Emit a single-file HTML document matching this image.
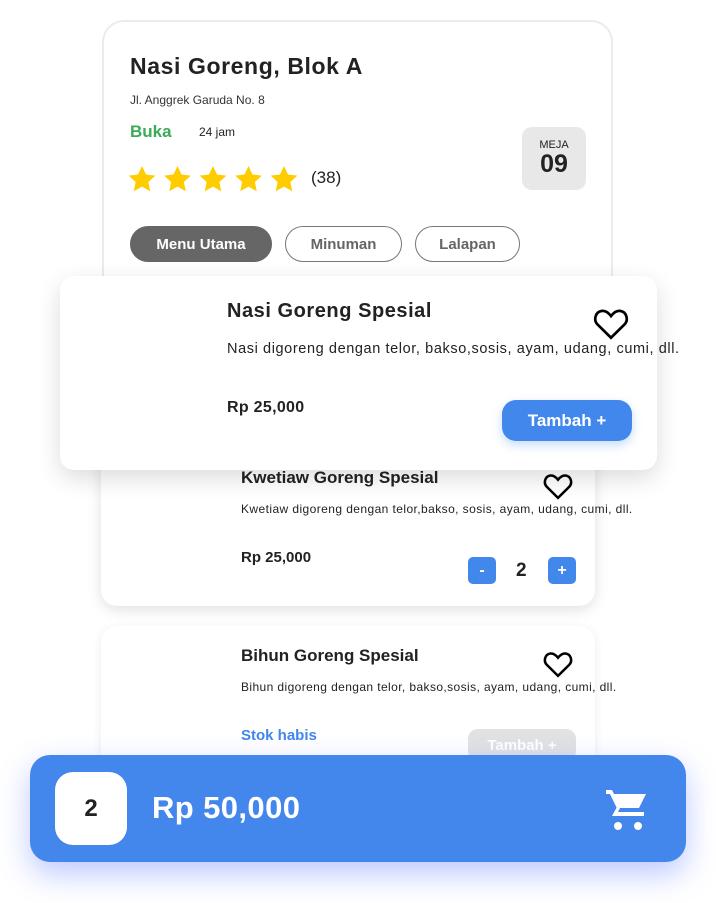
<!DOCTYPE html>
<html><head><meta charset="utf-8"><style>
*{margin:0;padding:0;box-sizing:border-box}
body{width:716px;height:903px;background:#fff;position:relative;overflow:hidden;font-family:"Liberation Sans",sans-serif;color:#222}
.a{position:absolute}
.card{position:absolute;background:#fff;border-radius:16px}
.b{font-weight:bold}
.tab{position:absolute;top:226px;height:36px;border-radius:18px;font-size:15px;font-weight:bold;display:flex;align-items:center;justify-content:center;border:1px solid #777;color:#666}
.btn{position:absolute;background:#4287ec;color:#fff;border-radius:5px;display:flex;align-items:center;justify-content:center;font-weight:bold}
</style></head><body>
<div class="card" style="left:102px;top:20px;width:511px;height:300px;border:2px solid #ebebeb;border-radius:22px"></div>
<div class="a b" style="left:130px;top:53px;font-size:23px;letter-spacing:.6px">Nasi Goreng, Blok A</div>
<div class="a" style="left:130px;top:93px;font-size:12px;color:#333">Jl. Anggrek Garuda No. 8</div>
<div class="a b" style="left:130px;top:122px;font-size:17px;color:#3bab57">Buka</div>
<div class="a" style="left:199px;top:125px;font-size:12px">24 jam</div>
<svg class="a" style="left:128px;top:165px" width="175" height="28" viewBox="0 0 175 28">
<g fill="#ffcc00">
<path id="s" d="M14 1l4 8.5 9.3 1.1-6.9 6.4 1.8 9.2L14 21.6 5.8 26.2l1.8-9.2L.7 10.6 10 9.5z"/>
<use href="#s" x="35.5"/><use href="#s" x="71"/><use href="#s" x="106.5"/><use href="#s" x="142"/>
</g></svg>
<div class="a" style="left:311px;top:168px;font-size:17px">(38)</div>
<div class="a" style="left:522px;top:127px;width:64px;height:63px;background:#e8e8e8;border-radius:10px;text-align:center">
<div style="font-size:11px;margin-top:12px">MEJA</div><div class="b" style="font-size:25px;line-height:26px">09</div></div>
<div class="tab" style="left:130px;width:142px;background:#666;color:#fff;border-color:#666">Menu Utama</div>
<div class="tab" style="left:285px;width:117px">Minuman</div>
<div class="tab" style="left:415px;width:105px">Lalapan</div>

<div class="card" style="left:101px;top:440px;width:494px;height:166px;box-shadow:0 4px 14px rgba(0,0,0,.12)"></div>
<div class="a b" style="left:241px;top:468px;font-size:17px">Kwetiaw Goreng Spesial</div>
<div class="a" style="left:241px;top:502px;font-size:12px;letter-spacing:.42px">Kwetiaw digoreng dengan telor,bakso, sosis, ayam, udang, cumi, dll.</div>
<div class="a b" style="left:241px;top:549px;font-size:15px">Rp 25,000</div>
<svg class="a" style="left:543px;top:472px" width="30" height="28" viewBox="0 0 24 22"><path d="M12 20.5L3 11.6C0.3 8.9 1.3 3.2 6 2.6c2.7-.3 4.6 1.6 6 3.4 1.4-1.8 3.3-3.7 6-3.4 4.7.6 5.7 6.3 3 9z" fill="none" stroke="#000" stroke-width="2"/></svg>
<div class="btn" style="left:468px;top:557px;width:28px;height:27px;font-size:16px">-</div>
<div class="a b" style="left:516px;top:560px;font-size:19px">2</div>
<div class="btn" style="left:548px;top:557px;width:28px;height:27px;font-size:16px">+</div>

<div class="card" style="left:101px;top:626px;width:494px;height:200px;box-shadow:0 2px 10px rgba(0,0,0,.08)"></div>
<div class="a b" style="left:241px;top:646px;font-size:17px">Bihun Goreng Spesial</div>
<div class="a" style="left:241px;top:680px;font-size:12px;letter-spacing:.4px">Bihun digoreng dengan telor, bakso,sosis, ayam, udang, cumi, dll.</div>
<div class="a b" style="left:241px;top:727px;font-size:15px;color:#4287ec">Stok habis</div>
<svg class="a" style="left:543px;top:650px" width="30" height="28" viewBox="0 0 24 22"><path d="M12 20.5L3 11.6C0.3 8.9 1.3 3.2 6 2.6c2.7-.3 4.6 1.6 6 3.4 1.4-1.8 3.3-3.7 6-3.4 4.7.6 5.7 6.3 3 9z" fill="none" stroke="#000" stroke-width="2"/></svg>
<div class="btn" style="left:468px;top:729px;width:108px;height:32px;font-size:15px;background:#e2e2e2;border-radius:10px">Tambah +</div>

<div class="card" style="left:60px;top:276px;width:597px;height:194px;border-radius:14px;box-shadow:0 8px 24px rgba(0,0,0,.14)"></div>
<div class="a b" style="left:227px;top:300px;font-size:20px;letter-spacing:.55px">Nasi Goreng Spesial</div>
<div class="a" style="left:227px;top:341px;font-size:14.5px;letter-spacing:.6px">Nasi digoreng dengan telor, bakso,sosis, ayam, udang, cumi, dll.</div>
<div class="a b" style="left:227px;top:399px;font-size:16px;letter-spacing:.3px">Rp 25,000</div>
<svg class="a" style="left:593px;top:307px" width="36" height="33" viewBox="0 0 24 22"><path d="M12 20.5L3 11.6C0.3 8.9 1.3 3.2 6 2.6c2.7-.3 4.6 1.6 6 3.4 1.4-1.8 3.3-3.7 6-3.4 4.7.6 5.7 6.3 3 9z" fill="none" stroke="#000" stroke-width="1.8"/></svg>
<div class="btn" style="left:502px;top:400px;width:130px;height:41px;font-size:17px;border-radius:14px;box-shadow:0 4px 10px rgba(66,135,236,.3)">Tambah +</div>

<div class="a" style="left:30px;top:755px;width:656px;height:107px;background:#4387ec;border-radius:20px;box-shadow:0 12px 30px rgba(67,100,255,.35)"></div>
<div class="a b" style="left:55px;top:772px;width:72px;height:73px;background:#fff;border-radius:18px;font-size:24px;display:flex;align-items:center;justify-content:center">2</div>
<div class="a b" style="left:152px;top:790px;font-size:31px;color:#fff;letter-spacing:.4px">Rp 50,000</div>
<svg class="a" style="left:604px;top:788px" width="48" height="44" viewBox="0 0 24 22"><path d="M1 1h3l1 2h16l-3.5 7H8l-1 2h13v2H4l2.3-4.2L3 3 2.6 3H1z" fill="#fff"/><circle cx="7" cy="19" r="2" fill="#fff"/><circle cx="17" cy="19" r="2" fill="#fff"/></svg>
</body></html>
